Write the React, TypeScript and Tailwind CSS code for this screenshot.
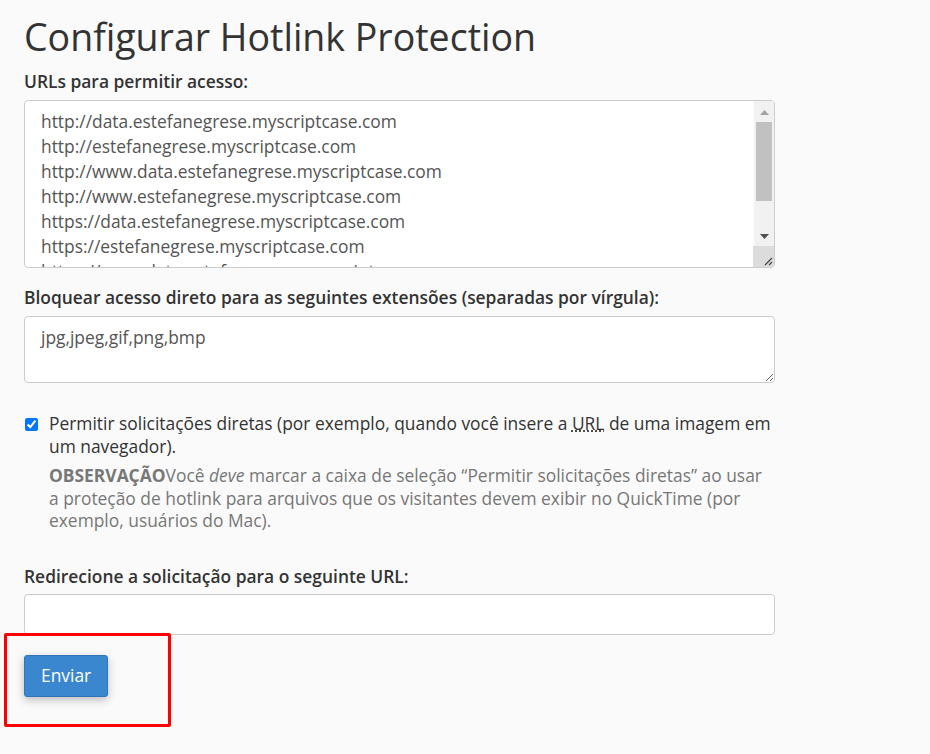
const urls = [
  'http://data.estefanegrese.myscriptcase.com',
  'http://estefanegrese.myscriptcase.com',
  'http://www.data.estefanegrese.myscriptcase.com',
  'http://www.estefanegrese.myscriptcase.com',
  'https://data.estefanegrese.myscriptcase.com',
  'https://estefanegrese.myscriptcase.com',
  'https://www.data.estefanegrese.myscriptcase.com',
  'https://www.estefanegrese.myscriptcase.com',
];

const font = { fontFamily: '"Open Sans", "Liberation Sans", sans-serif' };

// classic scrollbar look, drawn over the textarea since headless hides native ones
function FakeScrollbar() {
  return (
    <div className="pointer-events-none absolute top-[1px] right-[1px] bottom-[1px] flex w-[20px] flex-col bg-[#f1f1f1]">
      <div className="flex h-[17px] shrink-0 items-center justify-center pt-[5px]">
        <svg width="9" height="5" viewBox="0 0 9 5">
          <path d="M0 5 L4.5 0 L9 5 Z" fill="#a3a3a3" />
        </svg>
      </div>
      <div className="mx-[2px] mt-[4px] h-[79px] bg-[#c1c1c1]" />
      <div className="flex-1" />
      <div className="flex h-[17px] shrink-0 items-center justify-center pb-[3px]">
        <svg width="9" height="5" viewBox="0 0 9 5">
          <path d="M0 0 L9 0 L4.5 5 Z" fill="#505050" />
        </svg>
      </div>
      <div className="relative -ml-[1px] h-[21px] w-[21px] shrink-0 bg-[#dcdcdc]">
        <svg className="absolute right-[1px] bottom-[1px]" width="10" height="10" viewBox="0 0 10 10">
          <path d="M9 2 L2 9 M9 6 L6 9" stroke="#444" strokeWidth="1.2" />
        </svg>
      </div>
    </div>
  );
}

export default function App() {
  return (
    <div className="relative min-h-[754px] bg-[#fafafa] px-6 text-[#333]" style={font}>
      <h1 className="pt-[11px] text-[37.5px] leading-[52px] font-normal text-[#333]">Configurar Hotlink Protection</h1>

      <form className="w-[751px]" onSubmit={(e) => e.preventDefault()}>
        <label className="mt-[6px] block text-[17.4px] leading-6 font-semibold">URLs para permitir acesso:</label>
        <div className="relative mt-[7px]">
          <textarea
            readOnly
            defaultValue={urls.join('\n')}
            className="block h-[168px] w-full resize-none overflow-hidden rounded border border-[#ccc] bg-white py-[8px] pr-[24px] pl-4 text-[17.4px] leading-[25px] text-[#555] outline-none"
          />
          <FakeScrollbar />
        </div>

        <label className="mt-[17px] block text-[17.4px] leading-6 font-semibold">
          Bloquear acesso direto para as seguintes extensões (separadas por vírgula):
        </label>
        <textarea
          readOnly
          defaultValue="jpg,jpeg,gif,png,bmp"
          className="mt-[7px] block h-[67px] w-full resize-y rounded border border-[#ccc] bg-white px-4 py-[8px] text-[17.4px] leading-[25px] text-[#555] outline-none"
        />

        <div className="mt-[29px] flex items-start gap-[11px]">
          <input type="checkbox" defaultChecked className="mt-[6px] ml-[1px] h-[13px] w-[13px] shrink-0" />
          <div>
            <p className="text-[17.4px] leading-[23px] text-[#333]">
              Permitir solicitações diretas (por exemplo, quando você insere a{' '}
              <abbr title="Uniform Resource Locator" className="underline decoration-dotted">URL</abbr> de uma imagem em
              um navegador).
            </p>
            <p className="mt-[6px] text-[17.4px] leading-[22.5px] text-[#777]">
              <strong className="font-bold">OBSERVAÇÃO</strong>Você <em>deve</em> marcar a caixa de seleção “Permitir
              solicitações diretas” ao usar a proteção de hotlink para arquivos que os visitantes devem exibir no
              QuickTime (por exemplo, usuários do Mac).
            </p>
          </div>
        </div>

        <label className="mt-[32px] block text-[17.4px] leading-6 font-semibold">Redirecione a solicitação para o seguinte URL:</label>
        <input
          type="text"
          className="mt-[6px] block h-[41px] w-full rounded border border-[#ccc] bg-white px-4 text-[17.4px] text-[#555] outline-none"
        />

        <button
          type="submit"
          className="mt-[20px] h-[42px] rounded-[3px] border border-[#2f76b8] bg-[#3a87cf] px-4 text-[17.4px] text-white shadow-[0_3px_8px_rgba(0,0,0,0.25)]"
        >
          Enviar
        </button>
      </form>

      <div className="pointer-events-none absolute top-[633px] left-[4px] h-[94px] w-[167px] rounded-[2px] border-[3px] border-[#ff0000]" />
    </div>
  );
}
